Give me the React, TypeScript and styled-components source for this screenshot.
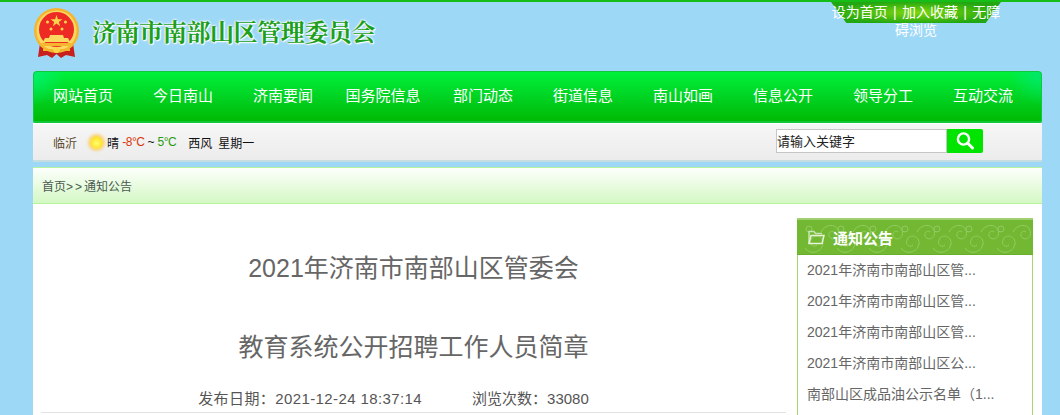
import React from "react";
import styled, { createGlobalStyle } from "styled-components";

const navItems = ["网站首页", "今日南山", "济南要闻", "国务院信息", "部门动态", "街道信息", "南山如画", "信息公开", "领导分工", "互动交流"];

const noticeItems = [
  "2021年济南市南部山区管...",
  "2021年济南市南部山区管...",
  "2021年济南市南部山区管...",
  "2021年济南市南部山区公...",
  "南部山区成品油公示名单（1...",
];

const GlobalStyle = createGlobalStyle`
  html, body {
    margin: 0;
    height: 415px;
    overflow: hidden;
    background: #9ed8f7;
    font-family: "Liberation Sans", "Noto Sans CJK SC", sans-serif;
  }
`;

const Page = styled.div`
  height: 415px;
  border-top: 2px solid #16bd16;
  box-sizing: border-box;
  overflow: hidden;
`;

const Wrapper = styled.div`
  width: 1009px;
  margin-left: 33px;
`;

const Header = styled.header`
  height: 69px;
  display: flex;
  justify-content: space-between;
`;

const Brand = styled.div`
  display: flex;
  align-items: flex-start;
  gap: 12px;
`;

const EmblemSvg = styled.svg`
  flex: none;
  margin-top: 6px;
`;

const Title = styled.h1`
  margin: 13px 0 0;
  font-size: 24px;
  line-height: 32px;
  font-weight: 700;
  letter-spacing: -0.4px;
  color: #1ca01c;
  text-shadow: 0 0 2px #fff, 0 0 2px #fff, 0 0 3px #fff, 1px 1px 1px #fff;
  font-family: "Noto Serif CJK SC", "Noto Sans CJK SC", serif;
`;

const TopLinks = styled.div`
  position: relative;
  width: 170px;
  margin-right: 41px;
  text-align: center;
  font-size: 14px;
  line-height: 18px;
  word-spacing: 1.4px;
  padding-top: 1px;
  color: #fff;
  z-index: 0;
  &::before {
    content: "";
    position: absolute;
    z-index: -1;
    top: 0;
    left: 0;
    width: 170px;
    height: 21px;
    clip-path: polygon(0 0, 100% 0, 91% 100%, 9% 100%);
    background: radial-gradient(ellipse at center, #7fd60d 0%, #22a712 75%);
  }
`;

const Nav = styled.nav`
  height: 52px;
  display: flex;
  box-sizing: border-box;
  border-radius: 4px 4px 2px 2px;
  box-shadow: inset 0 0 0 1px #10c83a, inset 0 -1px 0 1px #10c83a;
  background:
    radial-gradient(circle at 0 0, #00f070 0, rgba(0, 240, 112, 0) 34px),
    radial-gradient(circle at 100% 0, #00e870 0, rgba(0, 232, 112, 0) 34px),
    linear-gradient(#00f23a 0%, #00d020 55%, #00b800 100%);
`;

const NavItem = styled.a`
  width: 100px;
  text-align: center;
  line-height: 50px;
  font-size: 15px;
  color: #fff;
  white-space: nowrap;
  flex: none;
`;

const WeatherBar = styled.div`
  height: 39px;
  box-sizing: border-box;
  display: flex;
  align-items: center;
  padding: 0 59px 0 20px;
  font-size: 12px;
  color: #111;
  background: linear-gradient(#f6f6f6, #ececec);
  border-top: 1px solid #fff;
  border-bottom: 2px solid #c5dde0;
`;

const City = styled.span`
  color: #5a4a2c;
  margin-right: 13px;
`;

const Sun = styled.span`
  width: 13px;
  height: 13px;
  border-radius: 50%;
  margin-right: 4px;
  background: radial-gradient(circle at 50% 55%, #ffff70 0%, #ffe030 60%, #f8c040 100%);
  box-shadow: 0 0 3px 2px #fbd27a;
`;

const Temp = styled.span<{ $color: string }>`
  color: ${(p) => p.$color};
  letter-spacing: -0.5px;
`;

const Tilde = styled.span`
  margin: 0 3px;
`;

const Wind = styled.span`
  margin-left: 12px;
  margin-right: 6px;
`;

const Search = styled.form`
  margin: -2px 0 0 auto;
  display: flex;
`;

const SearchInput = styled.input`
  width: 171px;
  height: 24px;
  box-sizing: border-box;
  border: 1px solid #c6c6c6;
  padding: 0;
  background: #fff;
  font: 13px "Liberation Sans", "Noto Sans CJK SC", sans-serif;
  outline: none;
  &::placeholder {
    color: #222;
    opacity: 1;
  }
`;

const SearchButton = styled.button`
  width: 36px;
  height: 24px;
  padding: 0;
  border: 0;
  border-radius: 0 2px 2px 0;
  background: #00e400;
  display: flex;
  align-items: center;
  justify-content: center;
`;

const Crumbs = styled.div`
  margin-top: 5px;
  height: 37px;
  box-sizing: border-box;
  padding-left: 9px;
  line-height: 38px;
  font-size: 12px;
  color: #4a5a50;
  border-top: 1px solid #b4f59a;
  border-bottom: 1px solid #b4f59a;
  background: linear-gradient(#fdfffc, #d4f8c4);
`;

const CrumbSep = styled.span`
  letter-spacing: 2px;
`;

const Body = styled.div`
  height: 220px;
  background: #fff;
  display: flex;
  padding: 14px 9px 0 0;
  box-sizing: border-box;
`;

const Article = styled.article`
  width: 745px;
  margin-left: 8px;
  margin-right: 11px;
  flex: none;
  height: 194px;
  border-bottom: 1px solid #e2e2e2;
  text-align: center;
`;

const Heading = styled.h2`
  margin: 0;
  padding-top: 30px;
  font-size: 25px;
  font-weight: 400;
  line-height: 40px;
  color: #666;
  & + & {
    padding-top: 39px;
  }
`;

const Meta = styled.div`
  margin-top: 22px;
  padding-right: 40px;
  display: flex;
  justify-content: center;
  gap: 50px;
  font-size: 15px;
  line-height: 20px;
  color: #555;
`;

const PostDate = styled.span`
  letter-spacing: 0.4px;
`;

const Side = styled.aside`
  width: 236px;
  flex: none;
  box-sizing: border-box;
  border-left: 1px solid #a6d66e;
  border-right: 1px solid #a6d66e;
`;

const SideHead = styled.div`
  position: relative;
  height: 37px;
  margin: 0 -1px;
  box-sizing: border-box;
  display: flex;
  align-items: center;
  gap: 8px;
  padding-left: 10px;
  background: #72b832;
  border-top: 2px solid #a0d070;
  border-bottom: 1px solid #68ad2c;
  overflow: hidden;
`;

const SideTitle = styled.span`
  position: relative;
  font-size: 15px;
  font-weight: 700;
  color: #fff;
`;

const Swirls = styled.svg`
  position: absolute;
  left: 0;
  top: 0;
`;

const FolderSvg = styled.svg`
  position: relative;
  flex: none;
`;

const SideList = styled.ul`
  margin: 0;
  padding: 0 0 0 9px;
  list-style: none;
`;

const SideItem = styled.li`
  height: 31px;
  line-height: 31px;
  font-size: 14px;
  color: #666;
  white-space: nowrap;
`;

const Emblem = () => (
  <EmblemSvg width="47" height="50" viewBox="0 0 47 50">
    <path d="M7 35 L5 49 L14 47 L19 50 L23.5 46 L28 50 L33 47 L42 49 L40 35 Z" fill="#c8201c" />
    <circle cx="23.5" cy="22.5" r="22.5" fill="#f5b52e" />
    <circle cx="23.5" cy="22.5" r="20" fill="#fbd860" />
    <circle cx="23.5" cy="21.5" r="17.5" fill="#ee2a24" />
    <path d="M23.5 7 l1.4 4.3 h4.5 l-3.6 2.7 1.4 4.3 -3.7 -2.7 -3.7 2.7 1.4 -4.3 -3.6 -2.7 h4.5 Z" fill="#fbd64a" />
    <circle cx="14.5" cy="14" r="1.5" fill="#fbd64a" />
    <circle cx="32.5" cy="14" r="1.5" fill="#fbd64a" />
    <circle cx="18" cy="21" r="1.5" fill="#fbd64a" />
    <circle cx="29" cy="21" r="1.5" fill="#fbd64a" />
    <path d="M17 27 h13 l1 3 h4 l2 4 H10 l2 -4 h4 Z" fill="#fbd860" />
    <path d="M8 35 h31 l-3 3 H11 Z" fill="#f5b52e" />
    <circle cx="23.5" cy="42" r="3" fill="#fbd64a" />
    <path d="M10 41 h10 v2 h-10 Z M27 41 h10 v2 h-10 Z" fill="#f5b52e" />
  </EmblemSvg>
);

const SearchIcon = () => (
  <svg width="20" height="20" viewBox="0 0 20 20" fill="none" stroke="#fff" strokeLinecap="round">
    <circle cx="8.5" cy="8" r="5.6" strokeWidth="2.4" />
    <path d="M13 12.5 L17.5 17" strokeWidth="3" />
  </svg>
);

const FolderIcon = () => (
  <FolderSvg width="18" height="16" viewBox="0 0 18 16" fill="none" stroke="#e6f3d6" strokeWidth="1.5">
    <path d="M2 14 V2.5 h5 l1.5 2 H15" opacity="0.75" />
    <path d="M2 14.5 L4 6.5 H17 L15 14.5 Z" />
  </FolderSvg>
);

const swirlX = [8, 40, 72, 104, 136, 168, 200];

const SwirlBand = () => (
  <Swirls width="236" height="37" fill="none" stroke="#93cc62" strokeWidth="1">
    {swirlX.map((x) => (
      <g key={x}>
        <path d={`M${x} 28 c5 7 16 5 18 -4 c1 -8 -9 -11 -12 -4 c-2 5 3 8 6 5`} />
        <path d={`M${x + 16} 12 c4 -8 14 -9 17 -2 c3 8 -6 12 -9 6 c-1 -4 3 -6 5 -4`} />
        <circle cx={x + 4} cy={9} r="3" />
      </g>
    ))}
  </Swirls>
);

export default function App() {
  return (
    <Page>
      <GlobalStyle />
      <Wrapper>
        <Header>
          <Brand>
            <Emblem />
            <Title>济南市南部山区管理委员会</Title>
          </Brand>
          <TopLinks>设为首页 | 加入收藏 | 无障碍浏览</TopLinks>
        </Header>
        <Nav>
          {navItems.map((item) => (
            <NavItem key={item}>{item}</NavItem>
          ))}
        </Nav>
        <WeatherBar>
          <City>临沂</City>
          <Sun />
          <span>晴&nbsp;</span>
          <Temp $color="#d8380c">-8°C</Temp>
          <Tilde>~</Tilde>
          <Temp $color="#2a9a10">5°C</Temp>
          <Wind>西风</Wind>
          <span>星期一</span>
          <Search>
            <SearchInput placeholder="请输入关键字" />
            <SearchButton type="button">
              <SearchIcon />
            </SearchButton>
          </Search>
        </WeatherBar>
        <Crumbs>
          首页<CrumbSep>&gt;&gt;</CrumbSep>通知公告
        </Crumbs>
        <Body>
          <Article>
            <Heading>2021年济南市南部山区管委会</Heading>
            <Heading>教育系统公开招聘工作人员简章</Heading>
            <Meta>
              <PostDate>发布日期：2021-12-24 18:37:14</PostDate>
              <span>浏览次数：33080</span>
            </Meta>
          </Article>
          <Side>
            <SideHead>
              <SwirlBand />
              <FolderIcon />
              <SideTitle>通知公告</SideTitle>
            </SideHead>
            <SideList>
              {noticeItems.map((item, i) => (
                <SideItem key={i}>{item}</SideItem>
              ))}
            </SideList>
          </Side>
        </Body>
      </Wrapper>
    </Page>
  );
}
